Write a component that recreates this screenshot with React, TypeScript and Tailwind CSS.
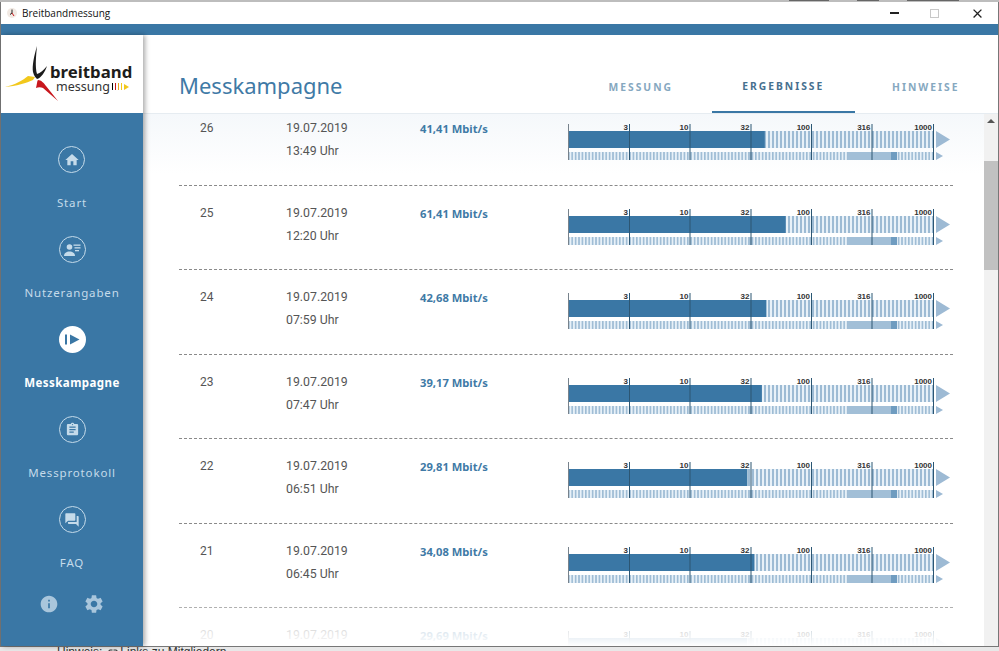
import React from 'react';
import { MdHome, MdAssignment, MdQuestionAnswer, MdInfo, MdSettings, MdClose, MdLink } from 'react-icons/md';

const rows = [
  { nr: 26, date: '19.07.2019', time: '13:49 Uhr', speed: 41.41 },
  { nr: 25, date: '19.07.2019', time: '12:20 Uhr', speed: 61.41 },
  { nr: 24, date: '19.07.2019', time: '07:59 Uhr', speed: 42.68 },
  { nr: 23, date: '19.07.2019', time: '07:47 Uhr', speed: 39.17 },
  { nr: 22, date: '19.07.2019', time: '06:51 Uhr', speed: 29.81 },
  { nr: 21, date: '19.07.2019', time: '06:45 Uhr', speed: 34.08 },
  { nr: 20, date: '19.07.2019', time: '06:30 Uhr', speed: 29.69 },
];

const ticks = [
  { label: '3', x: 61.5 },
  { label: '10', x: 122 },
  { label: '32', x: 183 },
  { label: '100', x: 243.5 },
  { label: '316', x: 304 },
  { label: '1000', x: 365.5 },
];

// 1 Mbit/s sits at x=0, one decade is 122 px
const speedToX = (speed: number) => Math.log10(speed) * 122;

const Chart = ({ speed, id }: { speed: number; id: number }) => {
  const fill = speedToX(speed) - 0.5;
  return (
    <svg width="384" height="40" viewBox="0 0 384 40" className="block">
      <defs>
        <pattern id={`big${id}`} width="4" height="20" patternUnits="userSpaceOnUse">
          <rect width="4" height="20" fill="#e8f1f8" />
          <rect width="2" height="20" fill="#9dbbd4" />
        </pattern>
        <pattern id={`small${id}`} width="3.4" height="20" patternUnits="userSpaceOnUse">
          <rect width="3.4" height="20" fill="#e8f1f8" />
          <rect width="1.6" height="20" fill="#9dbbd4" />
        </pattern>
      </defs>
      <rect x="0" y="7" width="366" height="17" fill={`url(#big${id})`} />
      <rect x="0" y="7" width={fill} height="17" fill="#3a77a5" />
      <polygon points="368,7 382,15.5 368,24" fill="#9dbad4" />
      <rect x="0" y="28" width="366" height="8" fill={`url(#small${id})`} />
      <rect x="180" y="28" width="4" height="8" fill="#a3bfd6" />
      <rect x="280" y="28" width="49" height="8" fill="#a2bfd7" />
      <rect x="323" y="28" width="6" height="8" fill="#6f9cc0" />
      <polygon points="368,28 375,32 368,36" fill="#9dbad4" />
      <rect x="0" y="0" width="1" height="36" fill="#77828c" />
      {ticks.map((t) => (
        <g key={t.label}>
          <rect x={t.x - 0.5} y="0" width="1" height="36" fill="#2c5673" />
          <text
            x={t.x - 1.5}
            y="6"
            textAnchor="end"
            fontSize="8"
            fontWeight="700"
            fontFamily="'Liberation Sans', sans-serif"
            fill="#333"
          >
            {t.label}
          </text>
        </g>
      ))}
    </svg>
  );
};

const NavIcon = ({ active, children }: { active?: boolean; children: React.ReactNode }) => (
  <div
    className={
      active
        ? 'flex h-[27px] w-[27px] items-center justify-center rounded-full bg-white text-[#3a77a5]'
        : 'flex h-[27px] w-[27px] items-center justify-center rounded-full border-[1.5px] border-[#c5dbea] text-[#c5dbea]'
    }
  >
    {children}
  </div>
);

const UserLines = () => (
  <svg width="17" height="14" viewBox="0 0 17 14" fill="currentColor">
    <circle cx="5.5" cy="4" r="2.8" />
    <path d="M0 13c0-3 2.5-4.6 5.5-4.6S11 10 11 13z" />
    <rect x="9.5" y="1.5" width="7" height="1.3" />
    <rect x="10.5" y="4.2" width="6" height="1.3" />
    <rect x="11" y="7" width="4" height="1.3" />
  </svg>
);

const PlayBar = () => (
  <svg width="15" height="11" viewBox="0 0 15 11" fill="currentColor">
    <rect x="0" y="0.5" width="2" height="10" />
    <polygon points="5,0.5 14.5,5.5 5,10.5" />
  </svg>
);

const navItems = [
  { label: 'Start', icon: <MdHome size={16} /> },
  { label: 'Nutzerangaben', icon: <UserLines /> },
  { label: 'Messkampagne', icon: <PlayBar />, active: true },
  { label: 'Messprotokoll', icon: <MdAssignment size={15} /> },
  { label: 'FAQ', icon: <MdQuestionAnswer size={16} /> },
];

const Logo = () => (
  <div className="relative flex h-[78px] items-center bg-white">
    <svg width="143" height="78" viewBox="0 0 143 78" className="absolute left-0 top-0">
      <path d="M36 11 C33 21 31 31 32 37 C33 41 35 43 36 44 C40 43 44 37 46 31 C43 35 39 38 36 39 C34 32 35 21 36 11z" fill="#1c1c1c" />
      <path d="M4 52 C14 50 22 45 27 41 L34 42 L32 45 C26 48 15 51 4 52z" fill="#f2c81c" />
      <path d="M35 53 C36 49 36 46 37 45 C40 45 43 48 45 51 L57 66 L42 53 C40 52 37 52 35 53z" fill="#c8171d" />
    </svg>
    <div className="relative ml-[49px] mt-[8px] flex flex-col font-['Noto_Sans',sans-serif] text-[#1d1d1b]">
      <span className="text-[16.8px] font-bold leading-[17px]">breitband</span>
      <div className="ml-[6px] flex items-center text-[12.5px] leading-[13px] text-[#333]">
        <span>messung</span>
        <span className="ml-[2px] flex items-center gap-[2px]">
          <i className="block h-[7px] w-[1px] bg-black" />
          <i className="block h-[7px] w-[1px] bg-[#c8171d]" />
          <i className="block h-[7px] w-[1px] bg-[#e8a81c]" />
          <i className="block h-[7px] w-[1px] bg-[#f2c81c]" />
          <i className="block h-0 w-0 border-y-[3px] border-l-[5px] border-y-transparent border-l-[#f2c81c]" />
        </span>
      </div>
    </div>
  </div>
);

export default function App() {
  return (
    <div className="flex h-[651px] w-[999px] flex-col overflow-hidden bg-[#dcdcdc] font-['Roboto',sans-serif]">
      <div className="flex h-[2px] shrink-0 justify-end gap-[28px] bg-[#bdbdbd] pr-[40px]">
        <span className="h-[1px] w-[40px] bg-[#666]" />
        <span className="h-[1px] w-[22px] bg-[#666]" />
        <span className="h-[1px] w-[52px] bg-[#666]" />
      </div>

      <div className="flex h-[645px] shrink-0 flex-col border-x border-b border-[#777] bg-white">
        {/* title bar */}
        <div className="flex h-[22px] shrink-0 items-center bg-white pl-[6px]">
          <svg width="10" height="10" viewBox="0 0 10 10">
            <circle cx="5" cy="5" r="5" fill="#f1e9e3" />
            <path d="M5 1.5V5M3 6.5L5 5" stroke="#222" strokeWidth="1" />
            <path d="M5 5L7 8" stroke="#c8171d" strokeWidth="1" />
          </svg>
          <span className="ml-[5px] font-['Open_Sans',sans-serif] text-[10px] text-[#111]">Breitbandmessung</span>
          <div className="ml-auto flex items-center pr-[13px]">
            <span className="h-[1.5px] w-[9px] bg-[#222]" />
            <span className="ml-[31px] h-[9px] w-[9px] border border-[#c8c8c8]" />
            <MdClose size={15} className="ml-[31px] text-[#222]" />
          </div>
        </div>
        <div className="h-[11px] shrink-0 bg-[#3a77a5]" />

        <div className="flex min-h-0 flex-1">
          {/* sidebar */}
          <aside className="z-10 flex w-[142px] shrink-0 flex-col bg-[#3a77a5] shadow-[2px_0_5px_rgba(0,0,0,0.35)]">
            <Logo />
            <nav className="flex flex-col items-center pt-[33px] font-['Noto_Sans',sans-serif]">
              {navItems.map((item) => (
                <div key={item.label} className="flex h-[90px] flex-col items-center">
                  <NavIcon active={item.active}>{item.icon}</NavIcon>
                  <span
                    className={
                      item.active
                        ? 'mt-[22px] text-[11.5px] font-bold leading-[16px] tracking-[0.45px] text-white'
                        : 'mt-[22px] text-[11.5px] leading-[16px] tracking-[0.85px] text-[#c5dbea]'
                    }
                  >
                    {item.label}
                  </span>
                </div>
              ))}
            </nav>
            <div className="-mt-[2px] flex justify-center gap-[24px] text-[#a9c6dc]">
              <MdInfo size={20} />
              <MdSettings size={22} className="-mt-[1px]" />
            </div>
          </aside>

          {/* content */}
          <main className="flex min-w-0 flex-1 flex-col">
            <header className="flex h-[79px] shrink-0 items-center border-b border-[#e6ecf1] pl-[36px]">
              <h1 className="mt-[22px] font-['Noto_Sans',sans-serif] text-[22px] font-normal text-[#3f7aa6]">Messkampagne</h1>
              <div className="ml-auto flex h-full -translate-x-[1px]">
                <div className="flex w-[142.5px] items-center justify-center pt-[28px] font-['Noto_Sans',sans-serif] text-[10.3px] font-bold tracking-[2px] text-[#86a8bf]">MESSUNG</div>
                <div className="flex w-[142.5px] items-center justify-center border-b-2 border-[#3a77a5] pt-[28px] font-['Noto_Sans',sans-serif] text-[10.3px] font-bold tracking-[2px] text-[#46708f]">ERGEBNISSE</div>
                <div className="flex w-[142.5px] items-center justify-center pt-[28px] font-['Noto_Sans',sans-serif] text-[10.3px] font-bold tracking-[2px] text-[#86a8bf]">HINWEISE</div>
              </div>
            </header>

            <div className="flex min-h-0 flex-1">
              <div className="relative min-w-0 flex-1 overflow-hidden">
                <div className="absolute inset-x-0 top-0 h-[60px] bg-gradient-to-b from-[#f5f8fb] to-transparent" />
                <div className="relative -mt-[12.6px] pl-[36px] pr-[31px]">
                  {rows.map((r) => (
                    <div key={r.nr} className="flex h-[84.5px] border-b border-dashed border-[#8a8a8a] pt-[16px]">
                      <div className="w-[107px] pl-[21px] text-[12px] leading-[23px] text-[#555]">{r.nr}</div>
                      <div className="w-[134px] text-[12.3px] leading-[23px] text-[#555]">
                        <div>{r.date}</div>
                        <div>{r.time}</div>
                      </div>
                      <div className="w-[148px] font-['Noto_Sans',sans-serif] text-[11.2px] font-bold leading-[23px] text-[#3f7aa6]">
                        {r.speed.toFixed(2).replace('.', ',')} Mbit/s
                      </div>
                      <div className="-mt-[2px] pt-[9px]">
                        <Chart speed={r.speed} id={r.nr} />
                      </div>
                    </div>
                  ))}
                </div>
                <div className="absolute inset-x-0 bottom-0 h-[50px] bg-gradient-to-b from-white/0 via-white/70 to-white" />
              </div>

              {/* scrollbar */}
              <div className="flex w-[14px] shrink-0 flex-col bg-[#f1f1f1]">
                <div className="flex h-[47px] justify-center pt-[5px]">
                  <span className="h-0 w-0 border-x-[4px] border-b-[4px] border-x-transparent border-b-[#555]" />
                </div>
                <div className="h-[109px] bg-[#c1c1c1]" />
              </div>
            </div>
          </main>
        </div>
      </div>

      <div className="flex h-[4px] shrink-0 items-start overflow-hidden bg-[#e8e8e8] pl-[57px] font-['Liberation_Sans',sans-serif] text-[12px] leading-[12px] text-[#333]">
        <span className="-mt-[1px]">Hinweis:</span>
        <MdLink size={12} className="-mt-[1px] ml-[5px]" />
        <span className="-mt-[1px] ml-[1px]">Links zu Mitgliedern</span>
      </div>
    </div>
  );
}
